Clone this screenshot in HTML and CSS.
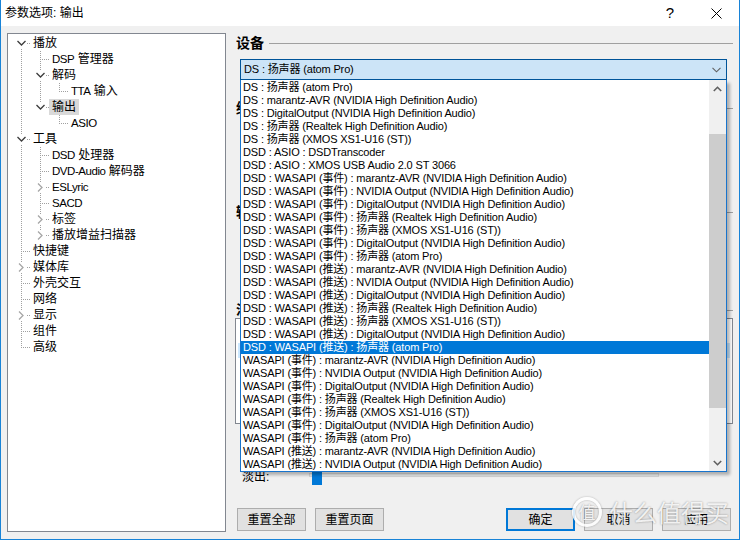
FILE: index.html
```html
<!DOCTYPE html>
<html lang="zh-CN">
<head>
<meta charset="utf-8">
<title>参数选项: 输出</title>
<link rel="stylesheet" href="styles.css">
</head>
<body>
<div class="window">
  <div class="titlebar">
    <span class="title">参数选项: 输出</span>
    <span class="tb-btn tb-help">?</span>
    <span class="tb-btn tb-close"><svg width="11" height="11" viewBox="0 0 11 11"><path d="M0.5 0.5 L10.5 10.5 M10.5 0.5 L0.5 10.5" stroke="#000" stroke-width="1" fill="none"/></svg></span>
  </div>
  <div class="main">
    <div class="tree">
      <div class="row"><span class="c f"><svg class="chev" width="19" height="16"><rect x="5" y="3" width="11" height="10" fill="#fff"/><polyline points="6.5,6 10.5,10 14.5,6" fill="none" stroke="#3c3c3c" stroke-width="1.3"/></svg></span><span class="lbl">播放</span></div>
      <div class="row"><span class="c v"></span><span class="c t"></span><span class="lbl"><span class="lat">DSP</span> 管理器</span></div>
      <div class="row"><span class="c v"></span><span class="c t"><svg class="chev" width="19" height="16"><rect x="5" y="3" width="11" height="10" fill="#fff"/><polyline points="6.5,6 10.5,10 14.5,6" fill="none" stroke="#3c3c3c" stroke-width="1.3"/></svg></span><span class="lbl">解码</span></div>
      <div class="row"><span class="c v"></span><span class="c v"></span><span class="c l"></span><span class="lbl"><span class="lat">TTA</span> 输入</span></div>
      <div class="row"><span class="c v"></span><span class="c l"><svg class="chev" width="19" height="16"><rect x="5" y="3" width="11" height="10" fill="#fff"/><polyline points="6.5,6 10.5,10 14.5,6" fill="none" stroke="#3c3c3c" stroke-width="1.3"/></svg></span><span class="lbl sel">输出</span></div>
      <div class="row"><span class="c v"></span><span class="c"></span><span class="c l"></span><span class="lbl"><span class="lat">ASIO</span></span></div>
      <div class="row"><span class="c t"><svg class="chev" width="19" height="16"><rect x="5" y="3" width="11" height="10" fill="#fff"/><polyline points="6.5,6 10.5,10 14.5,6" fill="none" stroke="#3c3c3c" stroke-width="1.3"/></svg></span><span class="lbl">工具</span></div>
      <div class="row"><span class="c v"></span><span class="c t"></span><span class="lbl"><span class="lat">DSD</span> 处理器</span></div>
      <div class="row"><span class="c v"></span><span class="c t"></span><span class="lbl"><span class="lat">DVD-Audio</span> 解码器</span></div>
      <div class="row"><span class="c v"></span><span class="c t"><svg class="chev" width="19" height="16"><rect x="5" y="3" width="11" height="10" fill="#fff"/><polyline points="8,4.5 12,8.5 8,12.5" fill="none" stroke="#a6a6a6" stroke-width="1.3"/></svg></span><span class="lbl"><span class="lat">ESLyric</span></span></div>
      <div class="row"><span class="c v"></span><span class="c t"></span><span class="lbl"><span class="lat">SACD</span></span></div>
      <div class="row"><span class="c v"></span><span class="c t"><svg class="chev" width="19" height="16"><rect x="5" y="3" width="11" height="10" fill="#fff"/><polyline points="8,4.5 12,8.5 8,12.5" fill="none" stroke="#a6a6a6" stroke-width="1.3"/></svg></span><span class="lbl">标签</span></div>
      <div class="row"><span class="c v"></span><span class="c l"><svg class="chev" width="19" height="16"><rect x="5" y="3" width="11" height="10" fill="#fff"/><polyline points="8,4.5 12,8.5 8,12.5" fill="none" stroke="#a6a6a6" stroke-width="1.3"/></svg></span><span class="lbl">播放增益扫描器</span></div>
      <div class="row"><span class="c t"></span><span class="lbl">快捷键</span></div>
      <div class="row"><span class="c t"><svg class="chev" width="19" height="16"><rect x="5" y="3" width="11" height="10" fill="#fff"/><polyline points="8,4.5 12,8.5 8,12.5" fill="none" stroke="#a6a6a6" stroke-width="1.3"/></svg></span><span class="lbl">媒体库</span></div>
      <div class="row"><span class="c t"></span><span class="lbl">外壳交互</span></div>
      <div class="row"><span class="c t"></span><span class="lbl">网络</span></div>
      <div class="row"><span class="c t"><svg class="chev" width="19" height="16"><rect x="5" y="3" width="11" height="10" fill="#fff"/><polyline points="8,4.5 12,8.5 8,12.5" fill="none" stroke="#a6a6a6" stroke-width="1.3"/></svg></span><span class="lbl">显示</span></div>
      <div class="row"><span class="c t"></span><span class="lbl">组件</span></div>
      <div class="row"><span class="c l"></span><span class="lbl">高级</span></div>
    </div>

    <div class="panel">
      <div class="heading"><span class="htext">设备</span><span class="hline"></span></div>
      <div class="combo-wrap">
        <div class="combo"><span class="combo-text">DS : 扬声器 (atom Pro)</span><svg width="9" height="6" viewBox="0 0 9 6"><polyline points="0.5,0.8 4.5,4.8 8.5,0.8" fill="none" stroke="#606060" stroke-width="1.1"/></svg></div>
        <div class="dropdown">
          <div class="items">
            <div class="item">DS : 扬声器 (atom Pro)</div>
            <div class="item">DS : marantz-AVR (NVIDIA High Definition Audio)</div>
            <div class="item">DS : DigitalOutput (NVIDIA High Definition Audio)</div>
            <div class="item">DS : 扬声器 (Realtek High Definition Audio)</div>
            <div class="item">DS : 扬声器 (XMOS XS1-U16 (ST))</div>
            <div class="item">DSD : ASIO : DSDTranscoder</div>
            <div class="item">DSD : ASIO : XMOS USB Audio 2.0 ST 3066</div>
            <div class="item">DSD : WASAPI (事件) : marantz-AVR (NVIDIA High Definition Audio)</div>
            <div class="item">DSD : WASAPI (事件) : NVIDIA Output (NVIDIA High Definition Audio)</div>
            <div class="item">DSD : WASAPI (事件) : DigitalOutput (NVIDIA High Definition Audio)</div>
            <div class="item">DSD : WASAPI (事件) : 扬声器 (Realtek High Definition Audio)</div>
            <div class="item">DSD : WASAPI (事件) : 扬声器 (XMOS XS1-U16 (ST))</div>
            <div class="item">DSD : WASAPI (事件) : DigitalOutput (NVIDIA High Definition Audio)</div>
            <div class="item">DSD : WASAPI (事件) : 扬声器 (atom Pro)</div>
            <div class="item">DSD : WASAPI (推送) : marantz-AVR (NVIDIA High Definition Audio)</div>
            <div class="item">DSD : WASAPI (推送) : NVIDIA Output (NVIDIA High Definition Audio)</div>
            <div class="item">DSD : WASAPI (推送) : DigitalOutput (NVIDIA High Definition Audio)</div>
            <div class="item">DSD : WASAPI (推送) : 扬声器 (Realtek High Definition Audio)</div>
            <div class="item">DSD : WASAPI (推送) : 扬声器 (XMOS XS1-U16 (ST))</div>
            <div class="item">DSD : WASAPI (推送) : DigitalOutput (NVIDIA High Definition Audio)</div>
            <div class="item selected">DSD : WASAPI (推送) : 扬声器 (atom Pro)</div>
            <div class="item">WASAPI (事件) : marantz-AVR (NVIDIA High Definition Audio)</div>
            <div class="item">WASAPI (事件) : NVIDIA Output (NVIDIA High Definition Audio)</div>
            <div class="item">WASAPI (事件) : DigitalOutput (NVIDIA High Definition Audio)</div>
            <div class="item">WASAPI (事件) : 扬声器 (Realtek High Definition Audio)</div>
            <div class="item">WASAPI (事件) : 扬声器 (XMOS XS1-U16 (ST))</div>
            <div class="item">WASAPI (事件) : DigitalOutput (NVIDIA High Definition Audio)</div>
            <div class="item">WASAPI (事件) : 扬声器 (atom Pro)</div>
            <div class="item">WASAPI (推送) : marantz-AVR (NVIDIA High Definition Audio)</div>
            <div class="item">WASAPI (推送) : NVIDIA Output (NVIDIA High Definition Audio)</div>
          </div>
          <div class="sb">
            <div class="sb-btn"><svg width="9" height="6" viewBox="0 0 9 6"><polyline points="0.8,5 4.5,1.3 8.2,5" fill="none" stroke="#606060" stroke-width="1.6"/></svg></div>
            <div class="sb-track"><div class="sb-thumb"></div></div>
            <div class="sb-btn"><svg width="9" height="6" viewBox="0 0 9 6"><polyline points="0.8,1 4.5,4.7 8.2,1" fill="none" stroke="#606060" stroke-width="1.6"/></svg></div>
          </div>
        </div>
      </div>
      <div class="heading h2"><span class="htext">缓冲长度</span><span class="hline"></span></div>
      <div class="spacer s1"></div>
      <div class="heading"><span class="htext">输出格式</span><span class="hline"></span></div>
      <div class="spacer s2"></div>
      <div class="heading"><span class="htext">淡入淡出</span><span class="hline"></span></div>
      <div class="fadebox">
        <div class="fb-head"></div>
        <div class="fb-row"></div>
      </div>
      <div class="fade-row">
        <span class="fade-label">淡出:</span>
        <div class="slider"><div class="track"></div><div class="thumb"></div></div>
      </div>
      <div class="buttons">
        <button class="btn">重置全部</button>
        <button class="btn">重置页面</button>
        <span class="btn-spacer"></span>
        <button class="btn default">确定</button>
        <button class="btn">取消</button>
        <button class="btn">应用</button>
      </div>
    </div>
  </div>
  <div class="watermark"><span class="wm-circle">值</span><span class="wm-text">什么值得买</span></div>
</div>
</body>
</html>
```

FILE: styles.css
```css
* { box-sizing: border-box; }
html, body { margin: 0; padding: 0; background: #fff; }
body {
  width: 740px; height: 541px; overflow: hidden;
  font-family: "Liberation Sans", "Noto Sans CJK SC", sans-serif;
  font-size: 12px; color: #000;
}
.window {
  width: 740px; height: 540px;
  border-left: 1px solid #1883d7; border-right: 1px solid #1883d7; border-bottom: 1px solid #1883d7;
  background: #f0f0f0;
  display: flex; flex-direction: column;
  position: relative;
}
.titlebar {
  height: 26px; flex: none; background: #fff;
  display: flex; align-items: center; padding-left: 4px;
}
.title { flex: 1; font-size: 12px; line-height: 16px; }
.tb-btn { width: 46px; height: 26px; display: flex; align-items: center; justify-content: center; }
.tb-help { font-size: 15px; font-family: "Liberation Sans", sans-serif; padding-bottom: 2px; }

.main { flex: 1; display: flex; align-items: flex-start; gap: 9px; padding: 7px 5px 0 6px; }

/* tree */
.tree {
  width: 219px; height: 499px; flex: none;
  background: #fff; border: 1px solid #828790;
  padding: 1px 0 0 3px;
}
.row { display: flex; height: 16px; align-items: center; }
.c {
  width: 19px; height: 16px; flex: none; display: block;
  background-repeat: no-repeat;
}
.chev { display: block; }
.v {
  background-image: repeating-linear-gradient(to bottom, #a0a0a0 0 1px, transparent 1px 2px);
  background-size: 1px 16px; background-position: 10px 0;
}
.t, .l, .f {
  background-image:
    repeating-linear-gradient(to bottom, #a0a0a0 0 1px, transparent 1px 2px),
    repeating-linear-gradient(to right, #a0a0a0 0 1px, transparent 1px 2px);
}
.t { background-size: 1px 16px, 9px 1px; background-position: 10px 0, 10px 8px; }
.l { background-size: 1px 9px, 9px 1px; background-position: 10px 0, 10px 8px; }
.f { background-size: 1px 8px, 9px 1px; background-position: 10px 8px, 10px 8px; }
.lbl { padding: 0 3px; line-height: 16px; height: 16px; white-space: nowrap; font-size: 12px; }
.lbl .lat { font-size: 11.5px; letter-spacing: -0.45px; }
.lbl.sel { background: #d9d9d9; }

/* right panel */
.panel { width: 499px; flex: none; display: flex; flex-direction: column; }
.heading { display: flex; align-items: center; height: 16px; margin-top: 2px; padding-left: 1px; }
.htext { font-weight: bold; font-size: 14px; line-height: 16px; white-space: nowrap; }
.hline { flex: 1; height: 1px; background: #a0a0a0; margin-left: 5px; margin-right: 1px; }
.h2 { margin-top: 20px; }
.s1 { height: 86px; }
.s2 { height: 80px; }

.combo-wrap { position: relative; margin-top: 8px; margin-left: 5px; width: 487px; height: 21px; }
.combo {
  height: 21px; border: 1px solid #005499; background: #cce4f7;
  display: flex; align-items: center; padding: 0 5px 0 3px;
}
.combo-text { flex: 1; font-size: 11px; line-height: 13px; white-space: nowrap; letter-spacing: -0.15px; }
.dropdown {
  position: absolute; left: 0; top: 21px; width: 487px; height: 392px; z-index: 5;
  background: #fff;
  border: 1px solid #1874cd; border-top: 0;
  box-shadow: 3px 3px 3px rgba(0,0,0,0.28);
  display: flex;
}
.items { flex: 1; padding-top: 1px; overflow: hidden; }
.item {
  height: 13px; line-height: 13px; font-size: 11px; padding-left: 2px;
  white-space: nowrap; overflow: hidden; letter-spacing: -0.15px;
}
.item.selected { background: #0078d7; color: #fff; }
.sb { width: 17px; flex: none; display: flex; flex-direction: column; background: #f0f0f0; }
.sb-btn { height: 17px; display: flex; align-items: center; justify-content: center; }
.sb-track { height: 357px; padding-top: 37px; }
.sb-thumb { height: 274px; background: #cdcdcd; }

.fadebox {
  margin-top: 0; width: 498px; height: 106px;
  border: 1px solid #828790; background: #fff; padding: 2px;
}
.fb-head { height: 22px; }
.fb-row { height: 15px; background: #cce8ff; }

.fade-row { display: flex; align-items: center; height: 20px; margin-top: 41px; }
.fade-label { width: 74px; padding-left: 7px; font-size: 12px; line-height: 16px; margin-top: 3px; }
.slider { width: 350px; height: 20px; display: grid; }
.track { grid-area: 1 / 1; align-self: center; height: 4px; background: #e7eaea; border: 1px solid #d6d6d6; }
.thumb { grid-area: 1 / 1; width: 10px; height: 20px; margin-left: 3px; background: #0078d7; }

.buttons { display: flex; gap: 9px; margin-top: 23px; padding-left: 2px; padding-right: 3px; }
.btn-spacer { flex: 1; }
.btn {
  width: 69px; height: 23px; flex: none;
  background: #e1e1e1; border: 1px solid #adadad; border-radius: 0;
  font-family: "Liberation Sans", "Noto Sans CJK SC", sans-serif; font-size: 12px; color: #000;
  padding: 0; line-height: 16px;
}
.btn.default { border: 2px solid #0078d7; }

.watermark {
  position: absolute; left: 571px; top: 497px;
  display: flex; align-items: center; gap: 7px;
  color: rgba(255,255,255,0.85);
  text-shadow: 0 0 2px rgba(0,0,0,0.4);
  pointer-events: none;
}
.wm-circle {
  width: 30px; height: 30px; border-radius: 50%;
  border: 3px solid rgba(255,255,255,0.85);
  box-shadow: 0 0 2px rgba(0,0,0,0.3), inset 0 0 2px rgba(0,0,0,0.3);
  display: flex; align-items: center; justify-content: center;
  font-size: 17px; line-height: 20px; font-family: "Noto Sans CJK SC", sans-serif;
}
.wm-text { font-size: 24px; line-height: 28px; font-family: "Noto Sans CJK SC", sans-serif; letter-spacing: 0; }
```
